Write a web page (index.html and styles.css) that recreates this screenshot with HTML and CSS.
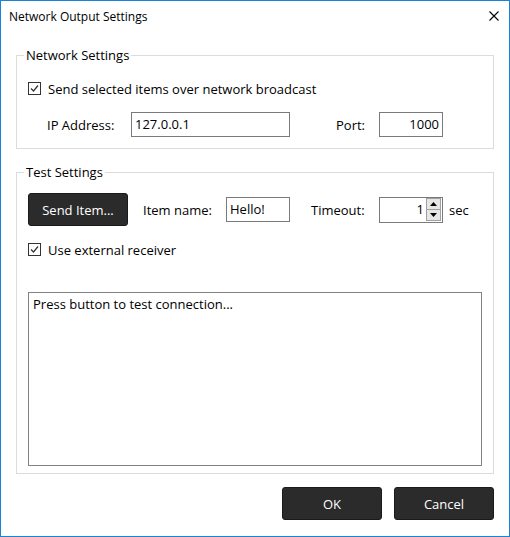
FILE: index.html
```html
<!DOCTYPE html>
<html>
<head>
<meta charset="utf-8">
<link rel="stylesheet" href="styles.css">
</head>
<body>
<div class="window">
  <div class="titlebar">
    <span class="title">Network Output Settings</span>
    <svg class="close" width="10" height="10" viewBox="0 0 10 10"><path d="M0.5 0.5L9.5 9.5M9.5 0.5L0.5 9.5" stroke="#000" stroke-width="1.1" fill="none"/></svg>
  </div>
  <div class="content">
    <fieldset class="group g1">
      <legend>Network Settings</legend>
      <div class="row chk-row first">
        <span class="chk"><svg width="11" height="11" viewBox="0 0 11 11"><path d="M2 5.5L4.5 8L9 2.5" stroke="#333" stroke-width="1.2" fill="none"/></svg></span>
        <span class="chk-label">Send selected items over network broadcast</span>
      </div>
      <div class="row ip-row">
        <span class="lbl ip-lbl">IP Address:</span>
        <span class="input ip">127.0.0.1</span>
        <span class="lbl port-lbl">Port:</span>
        <span class="input port">1000</span>
      </div>
    </fieldset>
    <fieldset class="group g2">
      <legend>Test Settings</legend>
      <div class="row send-row">
        <button class="btn send">Send Item...</button>
        <span class="lbl name-lbl">Item name:</span>
        <span class="input name">Hello!</span>
        <span class="lbl timeout-lbl">Timeout:</span>
        <span class="input spin"><span class="spin-val">1</span><span class="spin-btns"><span class="sb up"><svg width="7" height="4" viewBox="0 0 7 4"><path d="M0 4L3.5 0L7 4Z" fill="#000"/></svg></span><span class="sb down"><svg width="7" height="4" viewBox="0 0 7 4"><path d="M0 0L3.5 4L7 0Z" fill="#000"/></svg></span></span></span>
        <span class="lbl sec">sec</span>
      </div>
      <div class="row chk-row second">
        <span class="chk"><svg width="11" height="11" viewBox="0 0 11 11"><path d="M2 5.5L4.5 8L9 2.5" stroke="#333" stroke-width="1.2" fill="none"/></svg></span>
        <span class="chk-label">Use external receiver</span>
      </div>
      <div class="log">Press button to test connection...</div>
    </fieldset>
    <div class="footer">
      <button class="btn">OK</button>
      <button class="btn">Cancel</button>
    </div>
  </div>
</div>
</body>
</html>
```
FILE: styles.css
```css
* { box-sizing: border-box; }
html, body { margin: 0; padding: 0; background: #fff; }
body {
  font-family: "Segoe UI", "Open Sans", "Noto Sans", sans-serif;
  font-size: 12px;
  color: #000;
}
.window {
  width: 510px;
  height: 537px;
  border: 1px solid #1883d7;
  background: #fff;
}
.titlebar {
  height: 30px;
  display: flex;
  align-items: center;
  justify-content: space-between;
  padding: 0 10px 0 8px;
}
.title { font-size: 12px; line-height: 16px; margin-top: 1px; }
.close { display: block; margin-top: 0; }
.content { padding: 0 15px; }
.group {
  margin: 0;
  border: 1px solid #dcdcdc;
  padding: 0 11px;
  min-width: 0;
}
legend {
  margin-left: -4px;
  padding: 0 2px;
  font-size: 13px;
  line-height: 17px;
}
.g1 { margin-top: 16px; padding-bottom: 11px; }
.g2 { margin-top: 15px; padding-bottom: 7px; }
.row { display: flex; align-items: center; }
.chk-row { height: 13px; }
.chk-row.first { margin-top: 18px; }
.chk-row.second { margin-top: 17px; }
.chk {
  width: 13px; height: 13px;
  border: 1px solid #333;
  display: flex; align-items: center; justify-content: center;
  flex: none;
}
.chk svg { display: block; }
.chk-label { margin-left: 7px; font-size: 13px; line-height: 16px; }
.lbl { font-size: 13px; line-height: 16px; }
.ip-row { margin-top: 17px; height: 25px; padding-left: 19px; }
.ip-lbl { width: 84px; }
.input {
  height: 25px;
  border: 1px solid #7a7a7a;
  font-size: 13px;
  line-height: 23px;
  padding: 0 3px;
  color: #000;
  flex: none;
}
.ip { width: 159px; }
.port-lbl { margin-left: 46px; width: 43px; }
.port { width: 64px; text-align: right; }
.send-row { margin-top: 12px; height: 33px; }
.btn {
  width: 100px;
  height: 33px;
  background: #2b2b2b;
  color: #fff;
  border: 1px solid #1a1a1a;
  border-radius: 3px;
  font-family: inherit;
  font-size: 13px;
  padding: 0;
}
.name-lbl { margin-left: 15px; width: 83px; }
.name { width: 64px; }
.timeout-lbl { margin-left: 21px; width: 68px; }
.spin {
  width: 64px;
  display: flex;
  align-items: stretch;
  padding: 0 1px 0 0;
  height: 26px;
}
.spin-val { flex: 1; text-align: right; padding-right: 2px; }
.spin-btns { width: 15px; display: flex; flex-direction: column; padding: 0 0 1px; }
.sb {
  flex: 1;
  background: #e6e6e6;
  border: 1px solid #a0a0a0;
  display: flex; align-items: center; justify-content: center;
}
.sb.down { border-top: none; }
.sb svg { display: block; }
.sec { margin-left: 6px; }
.log {
  margin-top: 36px;
  height: 174px;
  border: 1px solid #828282;
  padding: 2px 4px;
  font-size: 13px;
  line-height: 18px;
}
.footer {
  display: flex;
  justify-content: flex-end;
  gap: 12px;
  margin-top: 13px;
}
```
